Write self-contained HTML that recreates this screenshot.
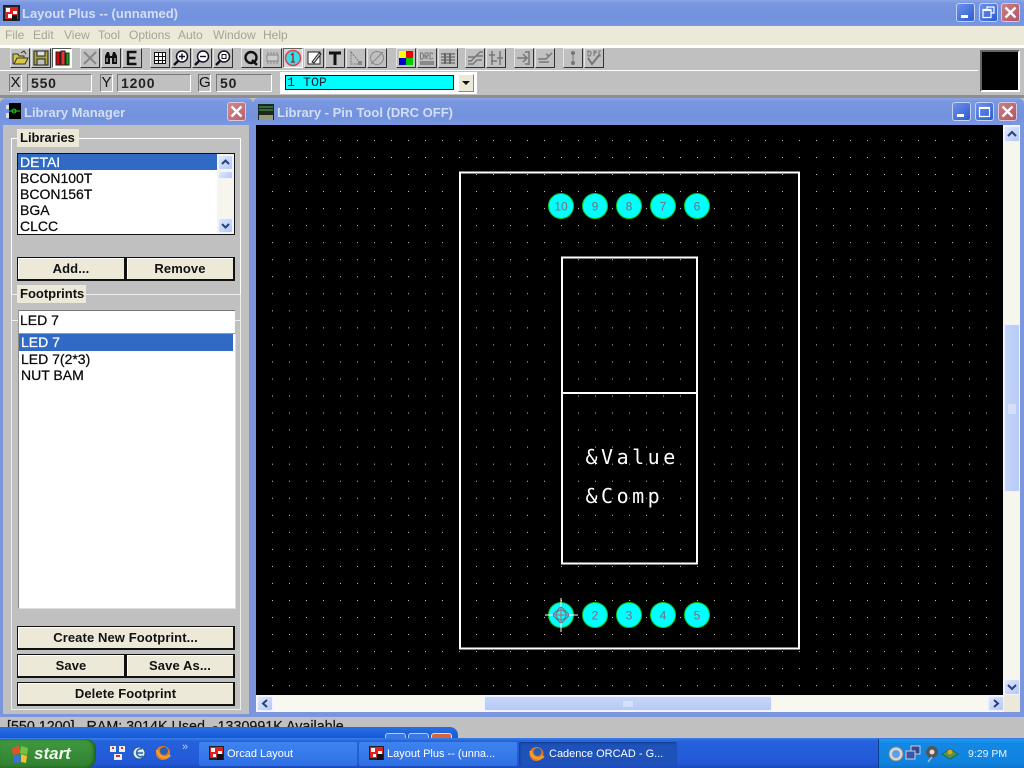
<!DOCTYPE html>
<html><head><meta charset="utf-8"><style>
html,body{margin:0;padding:0;width:1024px;height:768px;overflow:hidden;background:#c0c0c0;font-family:"Liberation Sans",sans-serif}
div,span{position:absolute;box-sizing:border-box;white-space:pre}
svg{position:absolute;left:0;top:0;overflow:visible}
.tb{background:linear-gradient(#8ba7e8 0,#7a97e0 12%,#7292dd 70%,#7a98e2 100%)}
.tt{color:#d3def6;font-weight:bold;font-size:13px;line-height:16px}
.m{top:28px;font-size:12px;line-height:14px;color:#a5a396}
.b{top:48px;width:20px;height:20px;background:#c0c0c0;border:1px solid;border-color:#e4e4e4 #333 #333 #e4e4e4}
.wb{width:19px;height:19px;border:1px solid #c3d2f4;border-radius:3px;background:linear-gradient(135deg,#6f92ea,#2c5cd0)}
.wc{width:19px;height:19px;border:1px solid #d8c8d8;border-radius:3px;background:linear-gradient(135deg,#c98080,#b05468)}
.fld{height:18px;border:1px solid;border-color:#777 #fff #fff #777;background:#c0c0c0;font:bold 14px/16px "Liberation Sans",sans-serif;color:#222;padding-left:3px;letter-spacing:.8px}
.lb{height:18px;width:13px;border:1px solid;border-color:#777 #fff #fff #777;font:15px/16px "Liberation Sans",sans-serif;color:#111;text-align:center}
.li{font-size:14px;line-height:16px;color:#0a0a0a;-webkit-text-stroke:.25px #0a0a0a}
.sel{background:#316ac5;color:#fff;-webkit-text-stroke:.25px #fff}
.btn{background:#ece9d8;border:1px solid #111;border-width:1px 2px 2px 1px;box-shadow:inset 1px 1px 0 #fff;text-align:center;font-size:13px;font-weight:bold;line-height:22px;color:#111;letter-spacing:.1px}
.gl{font-size:13px;font-weight:bold;background:#ece9d8;line-height:18px;color:#111;padding-left:3px}
.sb{background:linear-gradient(135deg,#dfe8fc,#b4c8f6);border:1px solid #eef3ff;border-radius:2px}
.task{top:742px;height:24px;border-radius:2px;background:linear-gradient(#3f83ee,#2f70e4)}
.tl{top:747px;color:#fff;font-size:11px;line-height:15px}
</style></head><body>

<!-- main title -->
<div class="tb" style="left:0;top:0;width:1024px;height:26px"></div>
<svg width="20" height="20" style="left:3px;top:5px"><rect width="17" height="16" fill="#222"/><rect x="2" y="2" width="13" height="12" fill="#d22"/><path d="M3 3h4v4H3zM10 6h4v3h-4zM5 9h4v4H5z" fill="#fff"/><path d="M9 10h5v5H9z" fill="#111"/></svg>
<div class="tt" style="left:22px;top:6px">Layout Plus -- (unnamed)</div>
<div class="wb" style="left:956px;top:3px"><svg width="17" height="17"><rect x="4" y="11" width="7" height="3" fill="#fff"/></svg></div>
<div class="wb" style="left:979px;top:3px"><svg width="17" height="17"><path d="M7 5V3h7v6h-3M3 5.500h8v8H3z" fill="none" stroke="#fff" stroke-width="1.200"/><path d="M3 6h8" stroke="#fff" stroke-width="2"/></svg></div>
<div class="wc" style="left:1001px;top:3px"><svg width="17" height="17"><path d="M3.500 3.500l10 10M13.500 3.500l-10 10" stroke="#fff" stroke-width="2.400"/></svg></div>

<!-- menu -->
<div style="left:0;top:26px;width:1024px;height:19px;background:#ece9d8"></div>
<div class="m" style="left:5px">File</div><div class="m" style="left:33px">Edit</div><div class="m" style="left:64px">View</div><div class="m" style="left:98px">Tool</div><div class="m" style="left:129px">Options</div><div class="m" style="left:178px">Auto</div><div class="m" style="left:213px">Window</div><div class="m" style="left:263px">Help</div>
<div style="left:0;top:45px;width:1024px;height:3px;background:#fff"></div>

<!-- toolbar area -->
<div style="left:0;top:48px;width:1024px;height:47px;background:#c0c0c0"></div>
<div style="left:0;top:70px;width:978px;height:1px;background:#fff"></div>
<div style="left:0;top:95px;width:1024px;height:3px;background:#8e8e8e"></div>

<div class="b" style="left:10px"><svg width="18" height="18"><path d="M2 15V5h5l1 2h5v2H6l-3 6h11l3-6H6" fill="#d8c840" stroke="#333"/><path d="M10 4l3-2 2 3" fill="none" stroke="#333"/></svg></div>
<div class="b" style="left:31px"><svg width="18" height="18"><path d="M2 2h14v14H2z" fill="#a9a63c" stroke="#222"/><rect x="5" y="2" width="8" height="5" fill="#ddd" stroke="#222"/><rect x="5" y="10" width="8" height="6" fill="#c0c0c0" stroke="#222"/></svg></div>
<div class="b" style="left:52px;background:#fff;border-color:#555 #fff #fff #555"><svg width="18" height="18"><rect x="3" y="3" width="4" height="13" fill="#d00" stroke="#222"/><rect x="8" y="2" width="4" height="14" fill="#e33" stroke="#222"/><rect x="13" y="4" width="3" height="12" fill="#0b0" stroke="#222"/></svg></div>
<div class="b" style="left:80px"><svg width="18" height="18"><path d="M3 3l12 12M15 3L3 15" stroke="#888" stroke-width="2"/></svg></div>
<div class="b" style="left:101px"><svg width="18" height="18"><path d="M3 15V7l2-4h2l1 4v8H4zM15 15V7l-2-4h-2l-1 4v8h4z" fill="#111"/><path d="M8 8h2" stroke="#111" stroke-width="2"/><path d="M5 9v4M13 9v4" stroke="#ddd"/></svg></div>
<div class="b" style="left:122px"><svg width="18" height="18"><path d="M4.500 3h9M4.500 9h8M4.500 15h9M5 2v14" stroke="#111" stroke-width="2.400" fill="none"/></svg></div>
<div class="b" style="left:150px"><svg width="18" height="18"><path d="M3.500 3.500h11v11h-11zM3.500 7.500h11M3.500 11.500h11M7.500 3.500v11M11.500 3.500v11" fill="#fff" stroke="#111"/></svg></div>
<div class="b" style="left:171px"><svg width="18" height="18"><circle cx="10" cy="7.500" r="5.500" fill="#fff" stroke="#112" stroke-width="1.500"/><path d="M6 12l-4 4" stroke="#112" stroke-width="2.400"/><path d="M7 7.500h6M10 4.500v6" stroke="#112" stroke-width="1.400"/></svg></div>
<div class="b" style="left:192px"><svg width="18" height="18"><circle cx="10" cy="7.500" r="5.500" fill="#fff" stroke="#112" stroke-width="1.500"/><path d="M6 12l-4 4" stroke="#112" stroke-width="2.400"/><path d="M7 7.500h6" stroke="#112" stroke-width="1.400"/></svg></div>
<div class="b" style="left:213px"><svg width="18" height="18"><circle cx="10" cy="7.500" r="5.500" fill="#fff" stroke="#112" stroke-width="1.500"/><path d="M6 12l-4 4" stroke="#112" stroke-width="2.400"/><rect x="8" y="5.500" width="4" height="4" fill="none" stroke="#112"/></svg></div>
<div class="b" style="left:241px"><svg width="18" height="18"><circle cx="9" cy="8.500" r="5.500" fill="none" stroke="#111" stroke-width="2.400"/><path d="M10 11l5 5" stroke="#111" stroke-width="2.400"/></svg></div>
<div class="b" style="left:262px"><svg width="18" height="18"><rect x="4" y="6" width="11" height="6" fill="#ccc" stroke="#888"/><path d="M5 3v3M8 3v3M11 3v3M14 3v3M5 12v3M8 12v3M11 12v3M14 12v3" stroke="#888"/></svg></div>
<div class="b" style="left:283px;background:#d6d6d6;border-color:#666 #fff #fff #666"><svg width="18" height="18"><circle cx="9" cy="9" r="7.500" fill="#35e0e8" stroke="#e04050" stroke-width="1.500"/><path d="M7 6l2-1.500V13M7 13h4" stroke="#c01020" stroke-width="1.300" fill="none"/></svg></div>
<div class="b" style="left:304px"><svg width="18" height="18"><rect x="3" y="3" width="12" height="12" fill="#fff" stroke="#222"/><path d="M7 13l7-9 2 1-7 9z" fill="#ccc" stroke="#222"/></svg></div>
<div class="b" style="left:325px"><svg width="18" height="18"><path d="M3 4h12M9 3v13" stroke="#111" stroke-width="3"/></svg></div>
<div class="b" style="left:346px"><svg width="18" height="18"><path d="M4 3l10 12H4z" fill="none" stroke="#777" stroke-dasharray="2 1"/><rect x="11" y="12" width="4" height="4" fill="#888"/></svg></div>
<div class="b" style="left:367px"><svg width="18" height="18"><circle cx="9" cy="9" r="6.500" fill="none" stroke="#888"/><path d="M3 15L15 3" stroke="#888"/></svg></div>
<div class="b" style="left:396px"><svg width="18" height="18"><rect x="2" y="2" width="7" height="7" fill="#ff0"/><rect x="9" y="2" width="7" height="7" fill="#e00"/><rect x="2" y="9" width="7" height="7" fill="#00c"/><rect x="9" y="9" width="7" height="7" fill="#0c0"/></svg></div>
<div class="b" style="left:417px"><svg width="18" height="18"><path d="M2 13h14M2 15h14" stroke="#777" stroke-width="1.500"/><path d="M2.500 4v6h2l1-2V6l-1-2zM7 10V4h3v3H7l3 3M15 5l-1-1h-2v6h2l1-1" fill="none" stroke="#777"/></svg></div>
<div class="b" style="left:438px"><svg width="18" height="18"><path d="M2 5h14M2 8h14M2 11h14M2 14h14" stroke="#777" stroke-width="1.500"/><path d="M6 4v11M11 4v11" stroke="#666" stroke-width="2"/></svg></div>
<div class="b" style="left:465px"><svg width="18" height="18"><path d="M2 8h7l5-5h3M2 12h3l5-5h7M2 15h5l4-4h5" fill="none" stroke="#777" stroke-width="1.500"/></svg></div>
<div class="b" style="left:486px"><svg width="18" height="18"><path d="M5 2v14M13 2v14M2 6h6M10 9h6M4 12h6" fill="none" stroke="#777" stroke-width="1.500"/></svg></div>
<div class="b" style="left:514px"><svg width="18" height="18"><path d="M2 9h9M8 5l4 4-4 4M14 2v14M10 3h4M10 15h4" fill="none" stroke="#777" stroke-width="1.500"/></svg></div>
<div class="b" style="left:535px"><svg width="18" height="18"><path d="M2 10h8l6-6M3 13h10M10 5l3 2" fill="none" stroke="#777" stroke-width="1.500"/></svg></div>
<div class="b" style="left:563px"><svg width="18" height="18"><path d="M9 2v14" stroke="#777"/><circle cx="9" cy="4" r="2" fill="#777"/><circle cx="9" cy="14" r="2" fill="#777"/></svg></div>
<div class="b" style="left:584px"><svg width="18" height="18"><path d="M3 9l4 6 8-10" fill="none" stroke="#777" stroke-width="2"/><path d="M3 2v5h2l1-2V3zM9 7V2h2v2H9M16 2h-2v5h2" fill="none" stroke="#777"/></svg></div>

<!-- coordinates row -->
<div class="lb" style="left:9px;top:74px">X</div>
<div class="fld" style="left:27px;top:74px;width:65px">550</div>
<div class="lb" style="left:100px;top:74px">Y</div>
<div class="fld" style="left:117px;top:74px;width:74px">1200</div>
<div class="lb" style="left:198px;top:74px">G</div>
<div class="fld" style="left:216px;top:74px;width:56px">50</div>
<div style="left:280px;top:72px;width:197px;height:22px;background:#fff"></div>
<div style="left:285px;top:75px;width:169px;height:15px;background:#00ffff;border:1px solid #111;font:13.300px/13px 'Liberation Mono',monospace;color:#123;padding-left:1px">1 TOP</div>
<div style="left:458px;top:74px;width:16px;height:18px;background:#ece9d8;border:1px solid;border-color:#fff #888 #888 #fff"><svg width="14" height="16"><path d="M3 6h8l-4 4z" fill="#111"/></svg></div>
<div style="left:980px;top:50px;width:40px;height:42px;background:#000;border:2px solid;border-color:#666 #fff #fff #666"></div>

<!-- status bar -->
<div style="left:0;top:713px;width:1024px;height:30px;background:#c0c0c0"></div>
<div style="left:7px;top:719px;font-size:14.300px;line-height:16px;color:#111;-webkit-text-stroke:.2px #111">[550,1200]   RAM: 3014K Used, -1330991K Available</div>

<!-- Library Manager -->
<div style="left:0;top:98px;width:253px;height:619px;background:#7c96dd;border-radius:6px 6px 0 0"></div>
<div class="tb" style="left:0;top:98px;width:253px;height:27px;border-radius:6px 6px 0 0"></div>
<svg width="18" height="18" style="left:5px;top:103px"><rect x="4" y="0" width="12" height="16" fill="#000"/><rect x="1" y="2" width="3" height="4" fill="#ddd"/><rect x="1" y="10" width="3" height="5" fill="#ddd"/><path d="M4 8h11" stroke="#2c2"/><circle cx="9" cy="8" r="2" fill="none" stroke="#2c2"/></svg>
<div class="tt" style="left:24px;top:105px">Library Manager</div>
<div class="wc" style="left:227px;top:102px;background:linear-gradient(135deg,#cf8a8a,#b86070)"><svg width="17" height="17"><path d="M3.500 3.500l10 10M13.500 3.500l-10 10" stroke="#fff" stroke-width="2.400"/></svg></div>
<div style="left:3px;top:125px;width:246px;height:589px;background:#c0c0c0"></div>

<!-- group boxes -->
<div style="left:11px;top:138px;width:230px;height:1px;background:#fff"></div>
<div style="left:11px;top:138px;width:1px;height:157px;background:#fff"></div>
<div style="left:240px;top:138px;width:1px;height:157px;background:#fff"></div>
<div style="left:11px;top:294px;width:230px;height:1px;background:#eee"></div>
<div style="left:11px;top:294px;width:1px;height:416px;background:#eee"></div>
<div style="left:240px;top:294px;width:1px;height:416px;background:#eee"></div>
<div style="left:11px;top:709px;width:230px;height:1px;background:#eee"></div>
<div style="left:11px;top:320px;width:230px;height:1px;background:#eee"></div>
<div class="gl" style="left:17px;top:129px;width:62px;height:18px">Libraries</div>
<div class="gl" style="left:17px;top:285px;width:69px;height:18px">Footprints</div>

<!-- libraries list -->
<div style="left:17px;top:153px;width:218px;height:82px;background:#fff;border:1px solid #111"></div>
<div class="li sel" style="left:18px;top:154px;width:199px;height:16px;padding-left:2px">DETAI</div>
<div class="li" style="left:20px;top:170px">BCON100T</div>
<div class="li" style="left:20px;top:186px">BCON156T</div>
<div class="li" style="left:20px;top:202px">BGA</div>
<div class="li" style="left:20px;top:218px">CLCC</div>
<div style="left:217px;top:154px;width:17px;height:80px;background:#f6f5ee"></div>
<div class="sb" style="left:218px;top:155px;width:15px;height:15px"><svg width="13" height="13"><path d="M3 8l3.500-3.500L10 8" fill="none" stroke="#2a3f7c" stroke-width="2"/></svg></div>
<div class="sb" style="left:218px;top:171px;width:15px;height:8px"></div>
<div class="sb" style="left:218px;top:218px;width:15px;height:15px"><svg width="13" height="13"><path d="M3 5l3.500 3.500L10 5" fill="none" stroke="#2a3f7c" stroke-width="2"/></svg></div>

<div class="btn" style="left:17px;top:257px;width:109px;height:24px">Add...</div>
<div class="btn" style="left:126px;top:257px;width:109px;height:24px">Remove</div>

<!-- footprints -->
<div style="left:18px;top:310px;width:217px;height:23px;background:#fff;border-top:1px solid #777;border-left:1px solid #999"></div>
<div class="li" style="left:20px;top:312px">LED 7</div>
<div style="left:18px;top:333px;width:218px;height:276px;background:#fff;border:1px solid;border-color:#999 #ddd #ddd #888"></div>
<div class="li sel" style="left:19px;top:334px;width:214px;height:17px;padding-left:2px;line-height:17px">LED 7</div>
<div class="li" style="left:21px;top:351px">LED 7(2*3)</div>
<div class="li" style="left:21px;top:367px">NUT BAM</div>

<div class="btn" style="left:17px;top:626px;width:218px;height:24px">Create New Footprint...</div>
<div class="btn" style="left:17px;top:654px;width:109px;height:24px">Save</div>
<div class="btn" style="left:126px;top:654px;width:109px;height:24px">Save As...</div>
<div class="btn" style="left:17px;top:682px;width:218px;height:24px">Delete Footprint</div>

<!-- Pin tool window -->
<div style="left:253px;top:98px;width:771px;height:619px;background:#7c96dd;border-radius:6px 6px 0 0"></div>
<div class="tb" style="left:253px;top:98px;width:771px;height:27px;border-radius:6px 6px 0 0"></div>
<svg width="18" height="18" style="left:258px;top:104px"><rect width="16" height="16" fill="#1a2a1a"/><path d="M1 3h14M1 6h14" stroke="#5a5"/><rect x="1" y="11" width="14" height="5" fill="#997"/></svg>
<div class="tt" style="left:277px;top:105px">Library - Pin Tool (DRC OFF)</div>
<div class="wb" style="left:952px;top:102px"><svg width="17" height="17"><rect x="4" y="11" width="7" height="3" fill="#fff"/></svg></div>
<div class="wb" style="left:975px;top:102px"><svg width="17" height="17"><path d="M3.500 4.500h10v9h-10z" fill="none" stroke="#fff" stroke-width="1.200"/><path d="M3 5h11" stroke="#fff" stroke-width="2"/></svg></div>
<div class="wc" style="left:998px;top:102px"><svg width="17" height="17"><path d="M3.500 3.500l10 10M13.500 3.500l-10 10" stroke="#fff" stroke-width="2.400"/></svg></div>

<!-- canvas -->
<div style="left:256px;top:125px;width:748px;height:570px;background:#000;overflow:hidden">
<svg width="748" height="570" viewBox="256 125 748 570">
<defs><pattern id="g" x="0" y="3.600" width="17" height="17.040" patternUnits="userSpaceOnUse"><rect x="0" y="0" width="1" height="1" fill="#c4c4c4"/></pattern></defs>
<rect x="256" y="125" width="748" height="570" fill="url(#g)"/>
<g fill="none" stroke="#fff" stroke-width="2">
<rect x="460" y="172.500" width="339" height="476"/>
<rect x="562" y="257.500" width="135" height="306"/>
<path d="M562 393h135"/>
</g>
<g fill="#00ffff" stroke="#00c81e" stroke-width="1">
<circle cx="561" cy="206" r="12.500"/><circle cx="595" cy="206" r="12.500"/><circle cx="629" cy="206" r="12.500"/><circle cx="663" cy="206" r="12.500"/><circle cx="697" cy="206" r="12.500"/>
<circle cx="561" cy="615" r="12.500"/><circle cx="595" cy="615" r="12.500"/><circle cx="629" cy="615" r="12.500"/><circle cx="663" cy="615" r="12.500"/><circle cx="697" cy="615" r="12.500"/>
</g>
<g font-family="Liberation Sans" font-size="12" fill="#7a6a80" text-anchor="middle">
<text x="561" y="210.500">10</text><text x="595" y="210.500">9</text><text x="629" y="210.500">8</text><text x="663" y="210.500">7</text><text x="697" y="210.500">6</text>
<text x="595" y="619.500">2</text><text x="629" y="619.500">3</text><text x="663" y="619.500">4</text><text x="697" y="619.500">5</text>
</g>
<g fill="none" stroke="#7a6a80">
<circle cx="561" cy="615" r="5"/><path d="M555 609h12v12h-12z" transform="rotate(45 561 615)"/>
</g>
<path d="M545 615h33M561 598v34" stroke="#fff" stroke-width="1"/>
<path d="M553 615h16M561 607v16" stroke="#c06070" stroke-width="1"/>
<g font-family="DejaVu Sans Mono" font-size="20" fill="#fff" letter-spacing="3.500">
<text x="585.500" y="464">&amp;Value</text>
<text x="585.500" y="503">&amp;Comp</text>
</g>
</svg>
</div>

<!-- v scroll -->
<div style="left:1003px;top:125px;width:17px;height:570px;background:#f6f5ee"></div>
<div class="sb" style="left:1004px;top:126px;width:16px;height:16px"><svg width="14" height="14"><path d="M3 9l4-4 4 4" fill="none" stroke="#2a3f7c" stroke-width="2"/></svg></div>
<div class="sb" style="left:1004px;top:324px;width:16px;height:168px;background:linear-gradient(90deg,#c3d3f8,#b8ccf6)"><svg width="14" height="14" style="top:79px"><path d="M3 1h8M3 3h8M3 5h8M3 7h8M3 9h8" stroke="#eef" /></svg></div>
<div class="sb" style="left:1004px;top:679px;width:16px;height:16px"><svg width="14" height="14"><path d="M3 5l4 4 4-4" fill="none" stroke="#2a3f7c" stroke-width="2"/></svg></div>

<!-- h scroll -->
<div style="left:256px;top:695px;width:764px;height:17px;background:#f8f7f0"></div>
<div class="sb" style="left:257px;top:696px;width:16px;height:15px"><svg width="14" height="13"><path d="M9 3L5 6.500 9 10" fill="none" stroke="#2a3f7c" stroke-width="2"/></svg></div>
<div class="sb" style="left:484px;top:696px;width:288px;height:15px;background:linear-gradient(#c8d6f9,#b6caf6)"><svg width="286" height="13"><path d="M139 4v6M141 4v6M143 4v6M145 4v6M147 4v6" stroke="#eef"/></svg></div>
<div class="sb" style="left:988px;top:696px;width:16px;height:15px"><svg width="14" height="13"><path d="M5 3l4 3.500L5 10" fill="none" stroke="#2a3f7c" stroke-width="2"/></svg></div>
<div style="left:1004px;top:695px;width:16px;height:17px;background:#ece9d8"></div>

<!-- background window strip -->
<div style="left:0;top:727px;width:458px;height:16px;border-radius:0 8px 0 0;background:linear-gradient(#2a6ee0,#0a50d4)"></div>
<div style="left:385px;top:733px;width:21px;height:10px;border-radius:3px 3px 0 0;background:#3d78e2;border:1px solid #bcd"></div>
<div style="left:408px;top:733px;width:21px;height:10px;border-radius:3px 3px 0 0;background:#3d78e2;border:1px solid #bcd"></div>
<div style="left:431px;top:733px;width:21px;height:10px;border-radius:3px 3px 0 0;background:#d8643c;border:1px solid #edc"></div>

<!-- taskbar -->
<div style="left:0;top:738px;width:1024px;height:30px;background:linear-gradient(#3c80e8 0,#2562dc 10%,#2258d6 85%,#1a48b8 100%)"></div>
<div style="left:0;top:739px;width:96px;height:29px;border-radius:0 10px 10px 0;background:linear-gradient(#3f9a3f,#3a8f3a 40%,#2f7f2f);box-shadow:inset -2px 0 3px #1c5a1c"></div>
<svg width="22" height="22" style="left:10px;top:744px"><path d="M2 4l7-2 1 7-7 2z" fill="#e8502a"/><path d="M11 2l7 2-1 7-7-2z" fill="#7ac040"/><path d="M3 12l7-2 1 8-7 1z" fill="#3a70d8"/><path d="M11 10l6 2-1 7-5-1z" fill="#f2c030"/></svg>
<div style="left:34px;top:742px;color:#eef5ea;font-size:17px;font-weight:bold;font-style:italic;line-height:24px">start</div>

<svg width="18" height="18" style="left:109px;top:744px"><rect x="1" y="2" width="6" height="6" fill="#eee"/><rect x="10" y="2" width="6" height="6" fill="#eee"/><rect x="5" y="10" width="8" height="6" fill="#eee"/><path d="M3 4h2M12 4h2M7 12h4" stroke="#c33" stroke-width="2"/></svg>
<svg width="18" height="18" style="left:131px;top:744px"><circle cx="8" cy="9" r="6" fill="#dfeaf8" stroke="#357"/><path d="M5 9h7M11 5a4 4 0 1 0 1 7" fill="none" stroke="#26a" stroke-width="1.500"/></svg>
<svg width="20" height="20" style="left:154px;top:743px"><circle cx="9" cy="10" r="7" fill="#e67a20"/><circle cx="10" cy="8" r="4" fill="#2b5fb0"/><path d="M3 7c1 7 9 10 13 5" fill="none" stroke="#f4a030" stroke-width="2.500"/></svg>
<div style="left:182px;top:741px;color:#b8d0f8;font-size:11px;line-height:12px">»</div>

<div class="task" style="left:199px;width:158px"></div>
<svg width="16" height="16" style="left:209px;top:746px"><rect width="15" height="14" fill="#222"/><rect x="1" y="1" width="13" height="11" fill="#d22"/><path d="M2 2h4v4H2zM9 5h4v3H9zM4 8h3v3H4z" fill="#fff"/><path d="M8 8h6v6H8z" fill="#111"/></svg>
<div class="tl" style="left:227px">Orcad Layout</div>
<div class="task" style="left:359px;width:158px"></div>
<svg width="16" height="16" style="left:369px;top:746px"><rect width="15" height="14" fill="#222"/><rect x="1" y="1" width="13" height="11" fill="#d22"/><path d="M2 2h4v4H2zM9 5h4v3H9zM4 8h3v3H4z" fill="#fff"/><path d="M8 8h6v6H8z" fill="#111"/></svg>
<div class="tl" style="left:387px">Layout Plus -- (unna...</div>
<div class="task" style="left:519px;width:158px;background:#1e52b8;box-shadow:inset 1px 1px 2px #123a88"></div>
<svg width="18" height="18" style="left:528px;top:745px"><circle cx="8.500" cy="9" r="7" fill="#e67a20"/><circle cx="9.500" cy="7" r="4" fill="#2b5fb0"/><path d="M2.500 6c1 7 9 10 13 5" fill="none" stroke="#f4a030" stroke-width="2.500"/></svg>
<div class="tl" style="left:549px">Cadence ORCAD - G...</div>

<!-- tray -->
<div style="left:878px;top:739px;width:146px;height:29px;background:linear-gradient(#1a9cf0,#1288e4 15%,#1082de 85%,#0f72c8);border-left:1px solid #0a3f90"></div>
<svg width="16" height="16" style="left:888px;top:746px"><circle cx="8" cy="8" r="7" fill="#d8d8d0" stroke="#888"/><circle cx="8" cy="8" r="4" fill="#5aa0e8"/></svg>
<svg width="16" height="16" style="left:905px;top:745px"><rect x="6" y="1" width="9" height="8" fill="#334a90" stroke="#ccd"/><rect x="1" y="6" width="9" height="8" fill="#3a55a8" stroke="#ccd"/></svg>
<svg width="16" height="18" style="left:924px;top:745px"><circle cx="8" cy="7" r="6" fill="#555"/><circle cx="8" cy="7" r="2.500" fill="#ddd"/><path d="M8 12l-4 5" stroke="#9bd" stroke-width="1.500"/></svg>
<svg width="18" height="16" style="left:941px;top:746px"><path d="M1 8l8-5 8 5-8 5z" fill="#4a9a4a" stroke="#264"/><circle cx="9" cy="6" r="2.500" fill="#e8a020"/></svg>
<div style="left:968px;top:747px;color:#e8f2fc;font-size:10.500px;line-height:14px">9:29 PM</div>
</body></html>
